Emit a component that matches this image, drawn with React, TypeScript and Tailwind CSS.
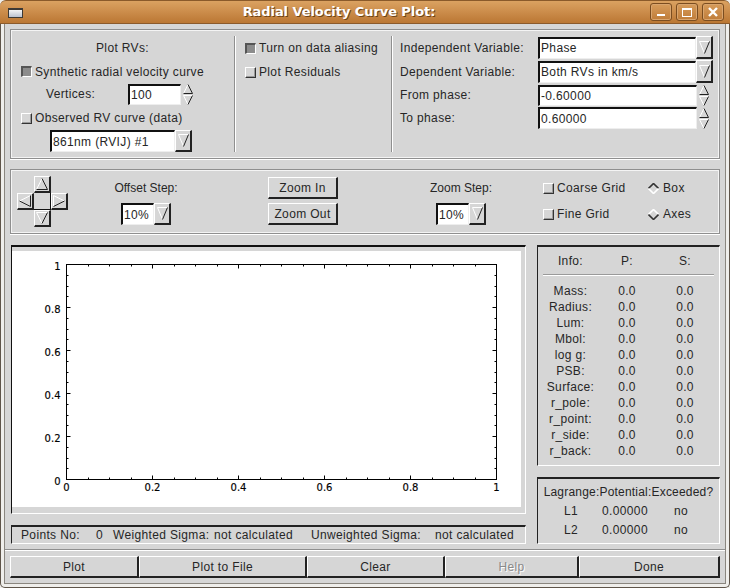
import React from 'react';

const Tri = ({ dir, w = 11, h = 11 }: { dir: 'up' | 'down' | 'left' | 'right'; w?: number; h?: number }) => {
  const W = w - 0.5;
  const H = h - 0.5;
  const mx = w / 2;
  const my = h / 2;
  let light = '';
  let dark = '';
  if (dir === 'down') {
    light = `M${W},0.5 L0.5,0.5 L${mx},${H}`;
    dark = `M${mx},${H} L${W},0.5`;
  } else if (dir === 'up') {
    light = `M0.5,${H} L${mx},0.5`;
    dark = `M${mx},0.5 L${W},${H} L0.5,${H}`;
  } else if (dir === 'left') {
    light = `M${W},0.5 L0.5,${my}`;
    dark = `M0.5,${my} L${W},${H} L${W},0.5`;
  } else {
    light = `M0.5,${H} L0.5,0.5 L${W},${my}`;
    dark = `M${W},${my} L0.5,${H}`;
  }
  return (
    <svg width={w} height={h} viewBox={`0 0 ${w} ${h}`} className="block">
      <path d={light} fill="none" stroke="#ffffff" strokeWidth="1" />
      <path d={dark} fill="none" stroke="#222222" strokeWidth="1" />
    </svg>
  );
};

const Check = ({ on = false }: { on?: boolean }) =>
  on ? (
    <span className="block w-[11px] h-[11px] shrink-0 bg-[#8c8c8c] border-t-2 border-l-2 border-b border-r border-t-[#555555] border-l-[#555555] border-b-white border-r-white" />
  ) : (
    <span className="block w-[11px] h-[11px] shrink-0 bg-[#d6d6d6] border-t border-l border-b border-r border-t-white border-l-white border-b-[#333333] border-r-[#333333] shadow-[inset_-1px_-1px_0_#9a9a9a]" />
  );

const Radio = ({ on = false }: { on?: boolean }) => (
  <svg width="11" height="11" viewBox="0 0 11 11" className="block shrink-0">
    <path d="M0.5,5.5 L5.5,0.5 L10.5,5.5" fill="none" stroke={on ? '#333333' : '#ffffff'} strokeWidth="1.6" />
    <path d="M0.5,5.5 L5.5,10.5 L10.5,5.5" fill="none" stroke={on ? '#ffffff' : '#333333'} strokeWidth="1.6" />
  </svg>
);

const Field = ({ text, className }: { text: string; className: string }) => (
  <div className={`flex items-center pl-[1px] bg-white border-t-2 border-l-2 border-b border-r border-t-[#111111] border-l-[#111111] border-b-[#eeeeee] border-r-[#eeeeee] ${className}`}>
    {text}
  </div>
);

const ArrowBtn = ({ className }: { className: string }) => (
  <div className={`flex items-center justify-center bg-[#d6d6d6] border-t border-l border-b-2 border-r-2 border-t-white border-l-white border-b-[#222222] border-r-[#222222] ${className}`}>
    <Tri dir="down" w={11} h={13} />
  </div>
);

const Spin = () => (
  <div className="flex flex-col items-center justify-center gap-[1px] w-[13px] shrink-0">
    <Tri dir="up" w={10} h={10} />
    <Tri dir="down" w={10} h={10} />
  </div>
);

const DPadBtn = ({ dir }: { dir: 'up' | 'down' | 'left' | 'right' }) => (
  <div className="flex items-center justify-center w-[17px] h-[17px] bg-[#d6d6d6] border-t border-l border-b-2 border-r-2 border-t-white border-l-white border-b-[#222222] border-r-[#222222]">
    <Tri dir={dir} w={12} h={12} />
  </div>
);

const Raised = ({ text, className }: { text: string; className: string }) => (
  <div className={`flex items-center justify-center bg-[#d6d6d6] border-t border-l border-b-2 border-r-2 border-t-white border-l-white border-b-[#222222] border-r-[#222222] ${className}`}>
    {text}
  </div>
);

const Sep = () => <div className="w-[2px] shrink-0 border-l border-r border-l-[#8f8f8f] border-r-white" />;

const xTicks = Array.from({ length: 21 }, (_, i) => i);
const yTicks = Array.from({ length: 21 }, (_, i) => i);

const Chart = () => {
  const x0 = 54.5;
  const y0 = 228.5;
  const w = 430;
  const h = 215;
  return (
    <svg width="509" height="256" viewBox="0 0 509 256" className="block">
      <rect x={x0} y={y0 - h} width={w} height={h} fill="none" stroke="#000000" />
      {xTicks.map((i) => {
        const x = Math.round(x0 + (w * i) / 20 - 0.5) + 0.5;
        const len = i % 4 === 0 ? 4 : 2;
        return (
          <g key={i}>
            <line x1={x} x2={x} y1={y0} y2={y0 - len} stroke="#000000" />
            <line x1={x} x2={x} y1={y0 - h} y2={y0 - h + len} stroke="#000000" />
          </g>
        );
      })}
      {yTicks.map((i) => {
        const y = Math.round(y0 - (h * i) / 20 - 0.5) + 0.5;
        const len = i % 4 === 0 ? 4 : 2;
        return (
          <g key={i}>
            <line x1={x0} x2={x0 + len} y1={y} y2={y} stroke="#000000" />
            <line x1={x0 + w} x2={x0 + w - len} y1={y} y2={y} stroke="#000000" />
          </g>
        );
      })}
      {['0', '0.2', '0.4', '0.6', '0.8', '1'].map((t, i) => (
        <text key={t} x={x0 + (w * i) / 5} y={y0 + 11} textAnchor="middle" fontSize="10" fontFamily="DejaVu Sans" letterSpacing="0" stroke="#000000" strokeWidth="0.15">
          {t}
        </text>
      ))}
      {['0', '0.2', '0.4', '0.6', '0.8', '1'].map((t, i) => (
        <text key={t} x={x0 - 6} y={y0 - (h * i) / 5 + 5} textAnchor="end" fontSize="10" fontFamily="DejaVu Sans" letterSpacing="0" stroke="#000000" strokeWidth="0.15">
          {t}
        </text>
      ))}
    </svg>
  );
};

const infoRows = ['Mass:', 'Radius:', 'Lum:', 'Mbol:', 'log g:', 'PSB:', 'Surface:', 'r_pole:', 'r_point:', 'r_side:', 'r_back:'];
const bottomButtons = [
  { label: 'Plot', w: 'w-[129px]' },
  { label: 'Plot to File', w: 'w-[168px]' },
  { label: 'Clear', w: 'w-[138px]' },
  { label: 'Help', w: 'w-[134px]' },
  { label: 'Done', w: 'w-[141px]' },
];

const App = () => {
  return (
    <div className="w-[730px] h-[588px] flex flex-col overflow-hidden bg-[#efeeeb] text-[12px] tracking-[0.35px] text-[#262626] font-['Liberation_Sans',sans-serif]">
      {/* title bar */}
      <div className="h-[24px] shrink-0 flex items-center pl-[8px] pr-[6px] rounded-t-[6px] border-t border-t-[#8a5a2a] border-b border-b-[#8b5a2b] bg-gradient-to-b from-[#dba261] to-[#bb7733]">
        <div className="w-[15px] h-[10px] mt-[2px] border border-[#3d3a36] border-t-2 bg-gradient-to-b from-[#f5f5f5] to-[#bcc3d0]" />
        <div className="flex-1 pl-[5px] text-center text-white text-[13px] tracking-[-0.07px] font-bold font-['DejaVu_Sans',sans-serif] [text-shadow:1px_1px_0_#6e4316]">
          Radial Velocity Curve Plot:
        </div>
        <div className="flex gap-[4px]">
          <div className="w-[22px] h-[18px] flex items-end justify-center pb-[4px] rounded-[3px] border border-[#7b4d20] shadow-[inset_0_0_0_1px_#d9a56e]">
            <div className="w-[8px] h-[2px] bg-white" />
          </div>
          <div className="w-[22px] h-[18px] flex items-center justify-center rounded-[3px] border border-[#7b4d20] shadow-[inset_0_0_0_1px_#d9a56e]">
            <div className="w-[10px] h-[9px] border border-t-2 border-white" />
          </div>
          <div className="w-[22px] h-[18px] flex items-center justify-center rounded-[3px] border border-[#7b4d20] shadow-[inset_0_0_0_1px_#d9a56e]">
            <svg width="10" height="10" viewBox="0 0 10 10" className="block">
              <path d="M1,1 L9,9 M9,1 L1,9" stroke="#ffffff" strokeWidth="2.4" fill="none" />
            </svg>
          </div>
        </div>
      </div>

      {/* window frame */}
      <div className="flex-1 min-h-0 flex flex-col rounded-b-[5px] border-l border-r border-b border-[#5e5449] pl-[3px] pr-[3px] pb-[3px]">
        <div className="flex-1 min-h-0 bg-[#d6d6d6] border-l border-r border-b border-[#8a867f] pt-[5px] flex flex-col">
          {/* top panel */}
          <div className="mx-[5px] h-[130px] shrink-0 flex py-[6px] border border-[#8f8f8f] shadow-[inset_0_0_0_1px_#f4f4f4,0_1px_0_#ffffff]">
            <div className="w-[223px] shrink-0 flex flex-col">
              <div className="h-[24px] flex items-center justify-center">Plot RVs:</div>
              <div className="h-[24px] flex items-center pl-[10px] gap-[3px]">
                <Check on />
                <span>Synthetic radial velocity curve</span>
              </div>
              <div className="h-[22px] flex items-center pl-[35px]">
                <span className="w-[82px]">Vertices:</span>
                <Field text="100" className="w-[53px] h-[21px]" />
                <Spin />
              </div>
              <div className="h-[24px] mt-[1px] flex items-center pl-[10px] gap-[3px]">
                <Check />
                <span>Observed RV curve (data)</span>
              </div>
              <div className="h-[22px] flex pl-[39px]">
                <Field text="861nm (RVIJ) #1" className="w-[125px] h-[22px]" />
                <ArrowBtn className="w-[17px] h-[22px]" />
              </div>
            </div>
            <Sep />
            <div className="w-[155px] shrink-0 flex flex-col pl-[9px]">
              <div className="h-[24px] flex items-center gap-[3px]">
                <Check on />
                <span>Turn on data aliasing</span>
              </div>
              <div className="h-[24px] flex items-center gap-[3px]">
                <Check />
                <span>Plot Residuals</span>
              </div>
            </div>
            <Sep />
            <div className="flex-1 flex flex-col gap-[1px] pl-[7px]">
              <div className="h-[23px] flex items-center">
                <span className="w-[138px]">Independent Variable:</span>
                <Field text="Phase" className="w-[158px] h-[22px]" />
                <ArrowBtn className="w-[17px] h-[23px]" />
              </div>
              <div className="h-[23px] flex items-center">
                <span className="w-[138px]">Dependent Variable:</span>
                <Field text="Both RVs in km/s" className="w-[158px] h-[22px]" />
                <ArrowBtn className="w-[17px] h-[23px]" />
              </div>
              <div className="h-[22px] flex items-center">
                <span className="w-[138px]">From phase:</span>
                <Field text="-0.60000" className="w-[159px] h-[21px]" />
                <Spin />
              </div>
              <div className="h-[22px] flex items-center">
                <span className="w-[138px]">To phase:</span>
                <Field text="0.60000" className="w-[159px] h-[22px]" />
                <Spin />
              </div>
            </div>
          </div>

          {/* navigation panel */}
          <div className="mx-[5px] mt-[10px] h-[65px] shrink-0 flex pl-[6px] pt-[6px] border border-[#8f8f8f] shadow-[inset_0_0_0_1px_#f4f4f4,0_1px_0_#ffffff]">
            <div className="w-[51px] h-[51px] shrink-0 grid grid-cols-3 grid-rows-3">
              <div />
              <DPadBtn dir="up" />
              <div />
              <DPadBtn dir="left" />
              <div className="border-b border-r border-b-[#111111] border-r-[#111111]" />
              <DPadBtn dir="right" />
              <div />
              <DPadBtn dir="down" />
              <div />
            </div>
            <div className="w-[200px] shrink-0 flex flex-col items-center pr-[44px]">
              <div className="h-[24px] flex items-center tracking-normal">Offset Step:</div>
              <div className="flex mt-[3px]">
                <Field text="10%" className="w-[33px] h-[22px]" />
                <ArrowBtn className="w-[17px] h-[22px]" />
              </div>
            </div>
            <div className="flex flex-col gap-[4px] w-[70px] shrink-0">
              <Raised text="Zoom In" className="w-[70px] h-[22px] mt-[1px]" />
              <Raised text="Zoom Out" className="w-[70px] h-[22px]" />
            </div>
            <div className="w-[205px] shrink-0 flex flex-col items-center pl-[41px]">
              <div className="h-[24px] flex items-center tracking-normal">Zoom Step:</div>
              <div className="flex mt-[3px]">
                <Field text="10%" className="w-[33px] h-[22px]" />
                <ArrowBtn className="w-[17px] h-[22px]" />
              </div>
            </div>
            <div className="w-[105px] shrink-0 flex flex-col">
              <div className="h-[24px] flex items-center gap-[3px]">
                <Check />
                <span>Coarse Grid</span>
              </div>
              <div className="h-[26px] mt-[1px] flex items-center gap-[3px]">
                <Check />
                <span>Fine Grid</span>
              </div>
            </div>
            <div className="flex flex-col">
              <div className="h-[24px] flex items-center gap-[4px]">
                <Radio on />
                <span>Box</span>
              </div>
              <div className="h-[26px] mt-[1px] flex items-center gap-[4px]">
                <Radio />
                <span>Axes</span>
              </div>
            </div>
          </div>

          {/* plot and info */}
          <div className="mx-[5px] mt-[11px] h-[299px] shrink-0 flex">
            <div className="w-[516px] shrink-0 pl-[1px] flex flex-col">
              <div className="h-[269px] border-t-2 border-l border-b border-r border-t-[#111111] border-l-[#111111] border-b-white border-r-white pt-[4px] shrink-0">
                <div className="w-[509px] h-[256px] bg-white">
                  <Chart />
                </div>
              </div>
              <div className="mt-[11px] h-[19px] flex items-center pl-[9px] border-t-2 border-l border-b border-r border-t-[#222222] border-l-[#222222] border-b-white border-r-white whitespace-nowrap">
                <span className="w-[75px]">Points No:</span>
                <span className="w-[17px]">0</span>
                <span className="w-[101px]">Weighted Sigma:</span>
                <span className="w-[97px]">not calculated</span>
                <span className="w-[124px]">Unweighted Sigma:</span>
                <span>not calculated</span>
              </div>
            </div>
            <div className="w-[183px] ml-[11px] shrink-0 flex flex-col">
              <div className="h-[221px] shrink-0 px-[5px] border-t-2 border-l border-b border-r border-t-[#222222] border-l-[#222222] border-b-white border-r-white">
                <div className="grid grid-cols-[55px_58px_58px] h-[28px] items-center text-center border-b border-b-[#9a9a9a] shadow-[0_1px_0_#ffffff]">
                  <span>Info:</span>
                  <span>P:</span>
                  <span>S:</span>
                </div>
                <div className="pt-[7px]">
                  {infoRows.map((r) => (
                    <div key={r} className="grid grid-cols-[55px_58px_58px] h-[16px] items-center text-center">
                      <span>{r}</span>
                      <span>0.0</span>
                      <span>0.0</span>
                    </div>
                  ))}
                </div>
              </div>
              <div className="mt-[11px] h-[67px] shrink-0 border-t-2 border-l border-b border-r border-t-[#222222] border-l-[#222222] border-b-white border-r-white pt-[3px]">
                <div className="text-center h-[19px] flex items-center justify-center tracking-[0.2px]">Lagrange:Potential:Exceeded?</div>
                {['L1', 'L2'].map((l) => (
                  <div key={l} className="grid grid-cols-[58px_58px_54px] h-[19px] items-center text-center">
                    <span className="pl-[8px]">{l}</span>
                    <span>0.00000</span>
                    <span>no</span>
                  </div>
                ))}
              </div>
            </div>
          </div>

          <div className="mt-[5px] h-[2px] shrink-0 border-t border-b border-t-[#8f8f8f] border-b-white" />

          {/* bottom buttons */}
          <div className="mx-[5px] mt-[5px] flex">
            {bottomButtons.map((b) => (
              <div
                key={b.label}
                className={`h-[22px] flex items-center justify-center bg-[#d6d6d6] border-t border-l border-b-2 border-r-2 border-t-white border-l-white border-b-[#222222] border-r-[#222222] ${b.w} ${
                  b.label === 'Help' ? 'text-[#8a8a8a] [text-shadow:1px_1px_0_#ffffff]' : ''
                }`}
              >
                {b.label}
              </div>
            ))}
          </div>
        </div>
      </div>
    </div>
  );
};

export default App;
